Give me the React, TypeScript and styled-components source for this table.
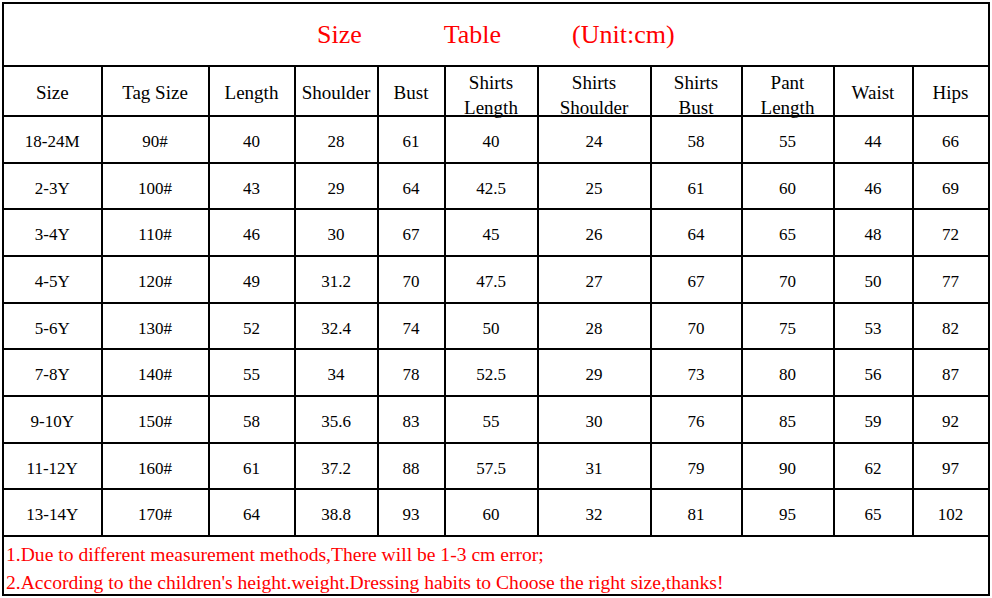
import React from "react";
import styled, { createGlobalStyle } from "styled-components";

const GlobalStyle = createGlobalStyle`
	body {
		margin: 0;
		background: #ffffff;
		font-family: "Liberation Serif", "Times New Roman", serif;
		color: #000000;
	}
`;

const Page = styled.div`
	padding: 2px 0 0 2px;
`;

const Table = styled.table`
	border-collapse: collapse;
	table-layout: fixed;
	width: 987.5px;
	border: 2px solid #000;
`;

const Col = styled.col<{ $w: number }>`
	width: ${(p) => p.$w}px;
`;

const Row = styled.tr<{ $h: number }>`
	height: ${(p) => p.$h}px;
`;

const TitleCell = styled.td`
	border: 2px solid #000;
	padding: 0;
	vertical-align: middle;
`;

const TitleLine = styled.div`
	display: flex;
	justify-content: center;
	align-items: baseline;
	color: #ff0000;
	font-size: 26px;
	line-height: 30px;
`;

const TitleWord = styled.span<{ $gap?: number }>`
	margin-left: ${(p) => p.$gap ?? 0}px;
`;

const HeadCell = styled.th`
	border: 2px solid #000;
	padding: 0;
	font-weight: normal;
	font-size: 19px;
	text-align: center;
	vertical-align: middle;
`;

const HeadLabel = styled.div<{ $multi: boolean }>`
	line-height: 25px;
	margin: ${(p) => (p.$multi ? "3px 0 -5px" : "0 0 -2px")};
`;

const Cell = styled.td`
	border: 2px solid #000;
	padding: 5px 0 0;
	font-size: 17px;
	line-height: 20px;
	text-align: center;
	vertical-align: middle;
`;

const NoteCell = styled.td`
	border: 2px solid #000;
	padding: 4px 0 0 2px;
	vertical-align: top;
	color: #ff0000;
	font-size: 19.6px;
`;

const NoteList = styled.div`
	height: 52px;
`;

const NoteLine = styled.div`
	line-height: 28px;
	white-space: nowrap;
`;

const widths = [98.5, 107, 86, 83, 67, 93, 113, 91, 92, 79, 76];

const headers = [
	["Size"],
	["Tag Size"],
	["Length"],
	["Shoulder"],
	["Bust"],
	["Shirts", "Length"],
	["Shirts", "Shoulder"],
	["Shirts", "Bust"],
	["Pant", "Length"],
	["Waist"],
	["Hips"],
];

const rows = [
	["18-24M", "90#", "40", "28", "61", "40", "24", "58", "55", "44", "66"],
	["2-3Y", "100#", "43", "29", "64", "42.5", "25", "61", "60", "46", "69"],
	["3-4Y", "110#", "46", "30", "67", "45", "26", "64", "65", "48", "72"],
	["4-5Y", "120#", "49", "31.2", "70", "47.5", "27", "67", "70", "50", "77"],
	["5-6Y", "130#", "52", "32.4", "74", "50", "28", "70", "75", "53", "82"],
	["7-8Y", "140#", "55", "34", "78", "52.5", "29", "73", "80", "56", "87"],
	["9-10Y", "150#", "58", "35.6", "83", "55", "30", "76", "85", "59", "92"],
	["11-12Y", "160#", "61", "37.2", "88", "57.5", "31", "79", "90", "62", "97"],
	["13-14Y", "170#", "64", "38.8", "93", "60", "32", "81", "95", "65", "102"],
];

const notes = [
	"1.Due to different measurement methods,There will be 1-3 cm error;",
	"2.According to the children's height.weight.Dressing habits to Choose the right size,thanks!",
];

export default function App() {
	return (
		<>
			<GlobalStyle />
			<Page>
				<Table>
					<colgroup>
						{widths.map((w, i) => (
							<Col key={i} $w={w} />
						))}
					</colgroup>
					<tbody>
						<Row $h={63}>
							<TitleCell colSpan={11}>
								<TitleLine>
									<TitleWord>Size</TitleWord>
									<TitleWord $gap={82}>Table</TitleWord>
									<TitleWord $gap={71}>(Unit:cm)</TitleWord>
								</TitleLine>
							</TitleCell>
						</Row>
						<Row $h={50}>
							{headers.map((lines, i) => (
								<HeadCell key={i}>
									<HeadLabel $multi={lines.length > 1}>
										{lines.map((l) => (
											<div key={l}>{l}</div>
										))}
									</HeadLabel>
								</HeadCell>
							))}
						</Row>
						{rows.map((r, i) => (
							<Row key={r[0]} $h={i % 3 === 1 ? 46 : 47}>
								{r.map((v, j) => (
									<Cell key={j}>{v}</Cell>
								))}
							</Row>
						))}
						<Row $h={59}>
							<NoteCell colSpan={11}>
								<NoteList>
									{notes.map((n) => (
										<NoteLine key={n}>{n}</NoteLine>
									))}
								</NoteList>
							</NoteCell>
						</Row>
					</tbody>
				</Table>
			</Page>
		</>
	);
}
